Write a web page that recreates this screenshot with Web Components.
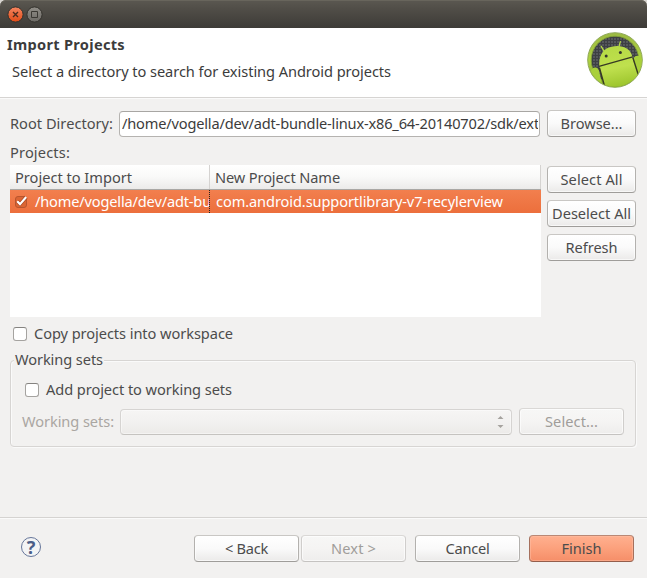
<!DOCTYPE html>
<html lang="en"><head><meta charset="utf-8"><title>Import Projects</title>
<style>
html,body{margin:0;width:647px;height:578px;overflow:hidden;background:#fff}
body{font:14.6px/20px "Noto Sans","Open Sans",sans-serif;color:#4c4c4c}
</style></head><body>
<import-dialog></import-dialog>
<script>
const define=(name,html,setup)=>customElements.define(name,class extends HTMLElement{
  connectedCallback(){
    if(!this.shadowRoot){const r=this.attachShadow({mode:'open'});r.innerHTML=html;}
    if(setup)setup.call(this,this.shadowRoot);
  }
});

// Label whose tracking is adjusted so the text spans the requested width.
define('fit-label',`<style>:host{display:block;white-space:pre;height:20px;line-height:18px}span{display:inline-block}</style><span><slot></slot></span>`,function(r){
  const w=+this.getAttribute('w'),s=r.querySelector('span'),n=this.textContent.length;
  if(!w)return;
  this.style.width=w+'px';
  s.style.letterSpacing=((w-s.getBoundingClientRect().width)/n)+'px';
});

define('push-button',`<style>
:host{display:flex;box-sizing:border-box;width:105px;height:27px;align-items:center;justify-content:center;border:1px solid #c2c0bd;border-color:#c9c7c4 #b3b1ae #9f9d9a;border-radius:4px;background:linear-gradient(#fff,#fafafa 50%,#ebeae9);box-shadow:inset 0 0 0 1px #ffffffa0;color:#4c4c4c}
:host([small]){width:89px}
:host([disabled]){color:#a09d9a;background:linear-gradient(#f7f7f6,#f5f4f3 50%,#eeedec);border-color:#dad8d6 #d0cecc #c5c3c1}
:host([primary]){background:linear-gradient(#ffb08f,#fca27e 45%,#f58e68);border-color:#ba8875 #a5705d #945e4b;box-shadow:inset 0 0 0 1px #ffc0a580}
</style><slot></slot>`);

define('check-box',`<style>:host{display:block;box-sizing:border-box;width:14px;height:14px;border:1px solid #a5a3a0;border-top-color:#858380;border-radius:3px;background:#fff}
svg{display:none;overflow:visible}
:host([checked]){width:12px;height:12px;margin-left:-1px;background:#dc6533;border-color:#b9552e}
:host([checked]) svg{display:block;margin:-2px 0 0 -1px}</style>
<svg width="13" height="12"><path d="M2.2 6.2 5 9.1 11.2 2" fill="none" stroke="#a94a26" stroke-width="3.6"/><path d="M2.2 6.2 5 9.1 11.2 2" fill="none" stroke="#fff" stroke-width="2.1"/></svg>`);

define('title-bar',`<style>:host{display:block;height:28px;background:#d9d6d2}
div{box-sizing:border-box;height:28px;padding:6px 0 0 7px;display:flex;gap:2px;border-radius:6px 6px 0 0;background:linear-gradient(#5b5851,#514e48 30%,#3d3b37);box-shadow:inset 0 1px #68655c}
svg{display:block}</style><div>
<svg width="17" height="17"><defs><linearGradient id="r" x2="0" y2="1"><stop stop-color="#f58661"/><stop offset="1" stop-color="#e24b16"/></linearGradient></defs><circle cx="8.5" cy="8.5" r="7.6" fill="url(#r)" stroke="#34322d"/><path d="m6 6 5 5m0-5-5 5" stroke="#4a2b1e" stroke-width="1.4"/></svg>
<svg width="17" height="17"><defs><linearGradient id="g" x2="0" y2="1"><stop stop-color="#918e88"/><stop offset="1" stop-color="#6b6964"/></linearGradient></defs><circle cx="8.5" cy="8.5" r="7.6" fill="url(#g)" stroke="#34322d"/><path d="M5.5 5.5h6v6h-6z" fill="none" stroke="#3a3833"/></svg></div>`);

define('android-logo',`<style>:host,svg{display:block;width:58px;height:58px}</style><svg viewBox="0 0 58 58"><defs>
<linearGradient id="a" x1=".3" x2=".5" y2="1"><stop stop-color="#b6da45"/><stop offset=".5" stop-color="#bfe04e"/><stop offset="1" stop-color="#98c128"/></linearGradient>
<linearGradient id="o" x2="0" y2="1"><stop stop-color="#9bb943"/><stop offset=".5" stop-color="#b0d33f"/><stop offset="1" stop-color="#789c26"/></linearGradient>
<pattern id="m" width="3" height="3" patternUnits="userSpaceOnUse"><path fill="#55575b" d="M0 0h3v3H0z"/><path d="M0 .5h3M.5 0v3" stroke="#3d3f43"/></pattern>
<clipPath id="d"><circle cx="29" cy="29" r="26.7"/></clipPath></defs>
<circle cx="29" cy="29" r="27.3" fill="url(#o)" stroke="#91a95b"/><circle cx="29" cy="29" r="23.8" fill="url(#m)" stroke="#7f9d35" stroke-width=".8"/>
<g clip-path="url(#d)"><path d="M5 40q1-4 5-3.500 2 .5 3 3l4 18H5zM47.500 27q3-4 7-1l4 5v28H46z" fill="#a9d03a"/>
<path d="M13.300 35C12.500 24 18 17 25.500 15.800 35 13.500 45 17 46.300 26l9 32H19z" fill="url(#a)"/>
<path d="M13 35.300 46.700 25.800M13.500 37l5 18M47 27l6 19" fill="none" stroke="#373a24" stroke-width="1.400"/></g>
<path d="m17.900 19.800-2.700-4.500M33 15.900l1.300-5.200" stroke="#b7db47" stroke-width="1.300" stroke-linecap="round"/><circle cx="20.200" cy="25" r="1.500" fill="#34362d"/><circle cx="34.400" cy="21.500" r="1.500" fill="#34362d"/></svg>`);

define('dialog-header',`<style>:host{box-sizing:border-box;display:flex;justify-content:space-between;height:70px;background:#fff;border-bottom:1px solid #d6d4d2;padding:3px 3px 0 7px;color:#3c3c3c}
.t{padding-top:4px}.b{font-weight:700;font-size:14.6px}.s{margin:7px 0 0 5px}</style>
<div class="t"><fit-label class="b" w="118">Import Projects</fit-label><fit-label class="s" w="379">Select a directory to search for existing Android projects</fit-label></div><android-logo></android-logo>`);

define('text-field',`<style>:host{box-sizing:border-box;display:block;width:421px;height:26px;border:1px solid #b5b3b0;border-color:#a8a6a3 #b5b3b0 #b5b3b0;border-radius:4px;background:#fff;padding:2px 2px 0 2px;color:#3c3c3c}
div{overflow:hidden;width:416px}</style><div><slot></slot></div>`);

define('project-table',`<style>:host{display:block;width:531px;height:152px;background:#fff}
.h,.r{display:grid;grid-template-columns:200px 331px;box-sizing:border-box}
.h{height:25px;background:linear-gradient(#fff,#f9f9f8 50%,#ebeae9);border-bottom:1px solid #a9a7a4}.h>div{padding:3px 0 0 5px;border-right:1px solid #d5d3d1}
.r{height:23px;background:linear-gradient(#f27f4e,#ec6f3c);color:#fff}
.p{display:flex;align-items:center;padding-left:6px;overflow:hidden;border-right:1px dotted #222}.p fit-label{margin-left:8px;flex:none}.n{padding:2px 0 0 6px}</style>
<div class="h"><div><fit-label w="117">Project to Import</fit-label></div><div><fit-label w="125">New Project Name</fit-label></div></div>
<div class="r"><div class="p"><check-box checked></check-box><fit-label w="176">/home/vogella/dev/adt-bu</fit-label></div><div class="n"><fit-label w="287">com.android.supportlibrary-v7-recylerview</fit-label></div></div>`);

define('combo-box',`<style>:host{box-sizing:border-box;display:flex;align-items:center;justify-content:flex-end;width:392px;height:26px;border:1px solid #d6d4d2;border-bottom-color:#c5c3c0;border-radius:4px;background:linear-gradient(#f6f5f4,#f2f1f0 50%,#eceae8);padding-right:7px;box-shadow:inset 0 0 0 1px #ffffff70}</style>
<svg width="7" height="14"><path d="M.5 4 3.5 1l3 3zM.5 10l3 3 3-3z" fill="#a6a39f"/></svg>`);

define('working-sets',`<style>:host{display:block;position:relative;box-sizing:border-box;width:626px;height:87px;border:1px solid #d7d5d3;border-radius:4px;box-shadow:inset 1px 1px #fafafa,1px 1px #fafafa;padding:19px 11px 0}
.l{position:absolute;left:3px;top:-11px;background:#f2f1f0;padding:0 1px}
.a{display:flex;align-items:center;gap:7px;padding-left:3px}.c{display:flex;align-items:center;margin-top:8px;color:#aaa6a2}combo-box{margin-left:6px}push-button{margin-left:7px}</style>
<div class="l"><fit-label w="88">Working sets</fit-label></div><div class="a"><check-box></check-box><fit-label w="186">Add project to working sets</fit-label></div>
<div class="c"><fit-label w="92">Working sets:</fit-label><combo-box></combo-box><push-button disabled><fit-label w="53">Select...</fit-label></push-button></div>`);

define('dialog-body',`<style>:host{display:block;box-sizing:border-box;height:419px;padding:12px 11px 0 10px;box-shadow:inset 0 1px #fafafa}
.root{display:flex;align-items:center;height:27px}text-field{margin-left:6px}.root push-button{margin-left:7px}
.l{margin-top:6px}.m{display:flex;margin-top:2px;gap:6px}.b{display:grid;gap:7px;align-content:start;padding-top:1px}
.k{display:flex;align-items:center;gap:7px;padding-left:3px;margin:7px 0 16px}</style>
<div class="root"><fit-label w="103">Root Directory:</fit-label><text-field><fit-label w="417">/home/vogella/dev/adt-bundle-linux-x86_64-20140702/sdk/ext</fit-label></text-field><push-button small><fit-label w="62">Browse...</fit-label></push-button></div>
<fit-label class="l" w="60">Projects:</fit-label>
<div class="m"><project-table></project-table><div class="b"><push-button small><fit-label w="62">Select All</fit-label></push-button><push-button small><fit-label w="79">Deselect All</fit-label></push-button><push-button small><fit-label w="52">Refresh</fit-label></push-button></div></div>
<div class="k"><check-box></check-box><fit-label w="199">Copy projects into workspace</fit-label></div><working-sets></working-sets>`);

define('dialog-footer',`<style>:host{display:flex;box-sizing:border-box;height:61px;border-top:1px solid #d5d3d1;box-shadow:inset 0 1px #fafafa;padding:17px 13px 0 20px;align-items:flex-start}
.help{display:flex;box-sizing:border-box;width:20px;height:20px;margin:2px 0 0 1px;border:1px solid #66769a;border-radius:50%;align-items:center;justify-content:center;color:#4a5d88;font:700 18px/18px "Noto Sans",sans-serif;background:#f3f4f5}
.b{display:flex;margin-left:auto;gap:9px}.n{display:flex;gap:2px}</style>
<div class="help">?</div><div class="b"><div class="n"><push-button><fit-label w="43">&lt; Back</fit-label></push-button><push-button disabled><fit-label w="45">Next &gt;</fit-label></push-button></div><push-button><fit-label w="44">Cancel</fit-label></push-button><push-button primary><fit-label w="40">Finish</fit-label></push-button></div>`);

define('import-dialog',`<style>:host{display:block;width:647px;height:578px;background:#f2f1f0}</style><title-bar></title-bar><dialog-header></dialog-header><dialog-body></dialog-body><dialog-footer></dialog-footer>`);
</script></body></html>
